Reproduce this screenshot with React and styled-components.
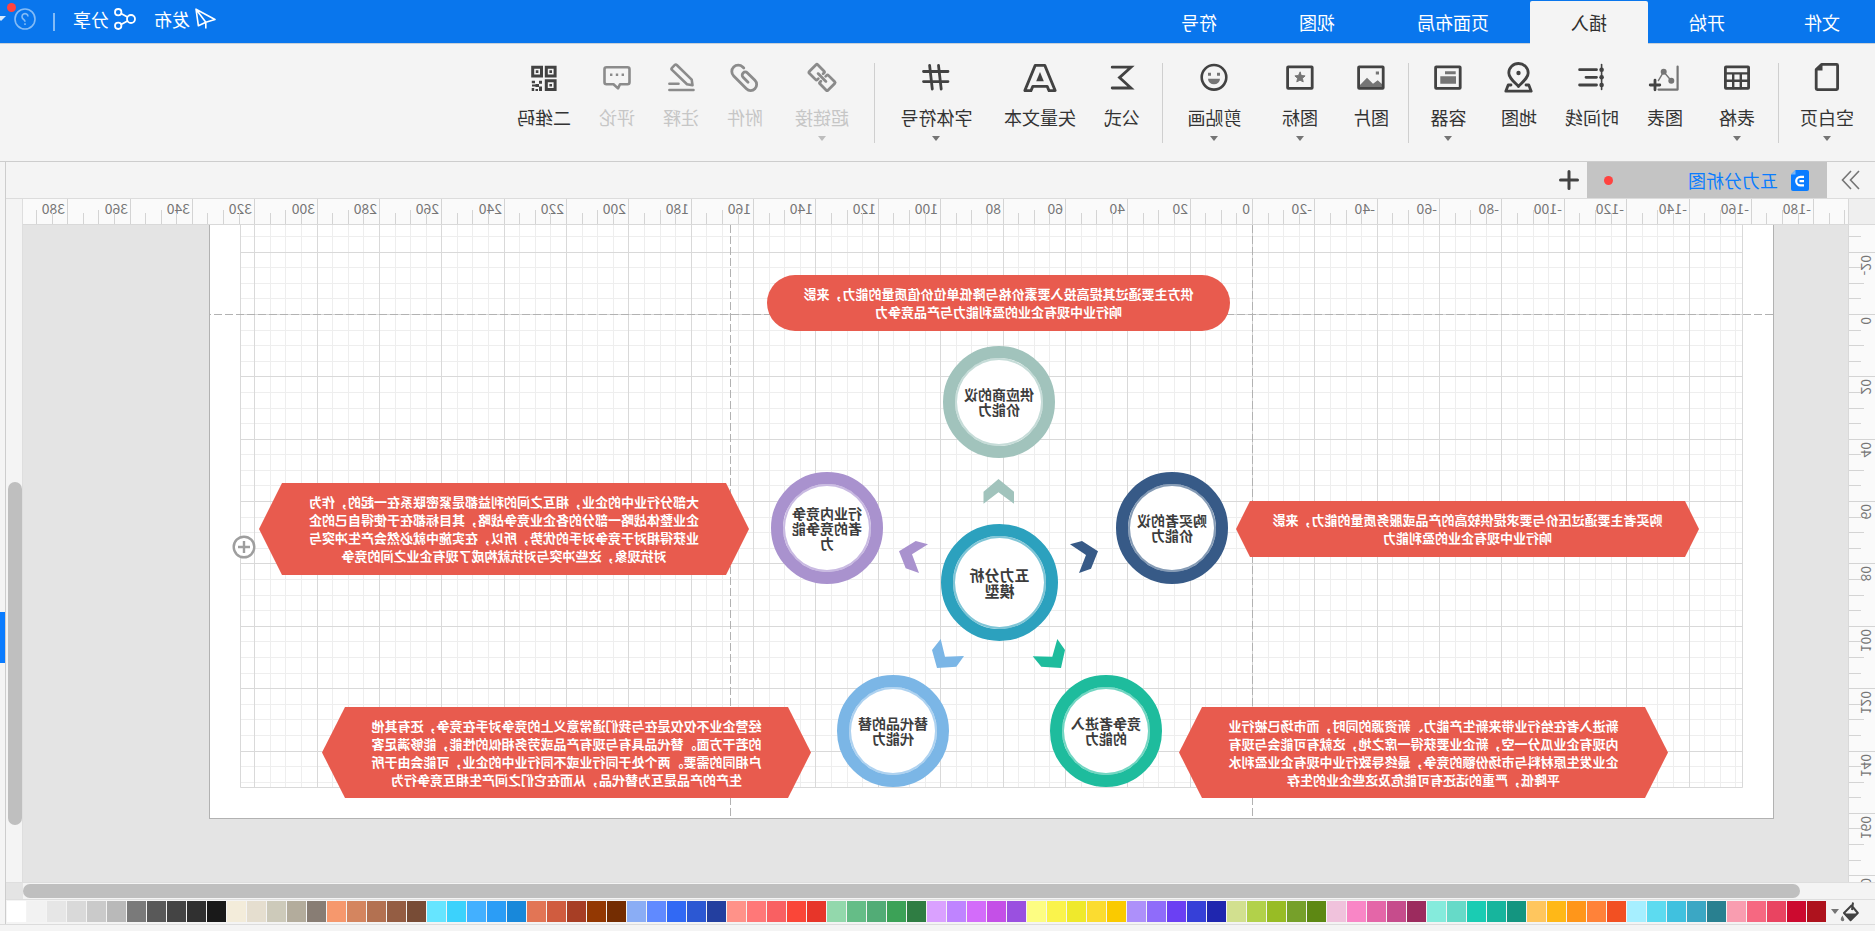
import React from 'react';
import styled, { createGlobalStyle } from 'styled-components';

const FONT = '"Noto Sans CJK SC", "Noto Sans", sans-serif';

const Global = createGlobalStyle`
  * { box-sizing: border-box; }
  html, body { margin: 0; height: 100%; overflow: hidden; background: #f4f4f4; }
  body { font-family: ${FONT}; color: #333; }
  button {
    margin: 0; padding: 0; border: 0; background: none;
    color: inherit; font: inherit; cursor: pointer;
  }
  svg { display: block; }
`;

/* The whole window is shown as seen in a mirror. */
const Window = styled.div`
  display: flex;
  flex-direction: column;
  height: 100vh;
  overflow: hidden;
  background: #f4f4f4;
  transform: scaleX(-1);
`;

/* ---------- title bar ---------- */

const Header = styled.header`
  display: flex;
  justify-content: space-between;
  height: 44px;
  flex: none;
  background: #0976ed;
  border-bottom: 1px solid #c8d0d8;
`;

const MenuTabs = styled.nav`
  display: flex;
  padding-top: 1px;
`;

const MenuTab = styled.button`
  height: 43px;
  padding: ${(p) => (p.$first ? '0 38px 2px 35px' : '0 41px 2px')};
  font-size: 18px;
  line-height: 36px;
  white-space: nowrap;
  color: ${(p) => (p.$active ? '#2f2f2f' : '#fff')};
  background: ${(p) => (p.$active ? '#f4f4f4' : 'transparent')};
  border-radius: 2px 2px 0 0;
`;

const HeaderActions = styled.div`
  display: flex;
  align-items: center;
  height: 38px;
  overflow: hidden;
  color: #fff;
`;

const ActionButton = styled.button`
  display: flex;
  align-items: center;
  gap: 5px;
  margin-right: 18px;
  font-size: 18px;
  line-height: 24px;
`;

const ActionDivider = styled.span`
  width: 2px;
  height: 18px;
  margin: 6px 17px 0 0;
  background: #83bbf6;
`;

const HelpButton = styled.button`
  position: relative;
  width: 36px;
  height: 22px;
`;

const AlertDot = styled.span`
  position: absolute;
  top: -5px;
  left: 20px;
  width: 9px;
  height: 9px;
  border-radius: 50%;
  background: #ff4340;
`;

/* ---------- ribbon ---------- */

const Ribbon = styled.div`
  display: flex;
  height: 118px;
  flex: none;
  border-bottom: 1px solid #cdcdcd;
`;

const Tool = styled.button`
  display: flex;
  flex-direction: column;
  align-items: center;
  width: ${(p) => p.$width}px;
  padding-top: 15px;
  font-size: 18px;
  line-height: 24px;
  white-space: nowrap;
  color: ${(p) => (p.disabled ? '#c6c6c6' : '#333')};
  svg { color: ${(p) => (p.disabled ? '#8b8b8b' : '#424242')}; }
  > span { margin-top: 10px; }
`;

const Separator = styled.span`
  width: 1px;
  height: 80px;
  margin-top: 19px;
  background: #cfcfcf;
`;

const Caret = styled.i`
  width: 0;
  height: 0;
  margin-top: ${(p) => p.$gap || 0}px;
  border: 4px solid transparent;
  border-top: 5px solid ${(p) => (p.$faint ? '#bdbdbd' : '#757575')};
  border-bottom: 0;
`;

/* ---------- body ---------- */

const Body = styled.div`
  display: flex;
  flex: 1;
  min-height: 0;
  border-bottom: 1px solid #dcdcdc;
`;

const Main = styled.main`
  display: flex;
  flex-direction: column;
  flex: 1;
  min-width: 0;
`;

const SideStrip = styled.aside`
  display: flex;
  align-items: flex-start;
  width: 6px;
  flex: none;
  border-left: 1px solid #cdcdcd;
`;

const SideMarker = styled.span`
  width: 5px;
  height: 51px;
  margin-top: 450px;
  background: #0a7cff;
`;

const DocBar = styled.div`
  display: flex;
  align-items: center;
  height: 37px;
  flex: none;
  border-bottom: 1px solid #dcdcdc;
`;

const ExpandButton = styled.button`
  display: flex;
  justify-content: center;
  width: 48px;
`;

const DocTab = styled.button`
  display: flex;
  align-items: center;
  width: 240px;
  height: 36px;
  padding: 0 17px 0 18px;
  gap: 13px;
  background: #c4c4c4;
  color: #0a7cff;
  font-size: 18px;
  line-height: 24px;
`;

const UnsavedDot = styled.i`
  width: 9px;
  height: 9px;
  margin-left: auto;
  border-radius: 50%;
  background: #ff4340;
`;

const AddButton = styled.button`
  margin-left: 8px;
`;

const Workspace = styled.div`
  display: grid;
  grid-template-columns: 27px 1fr 17px;
  grid-template-rows: 26px 1fr;
  flex: 1;
  min-height: 0;
`;

const RulerCorner = styled.div`
  background: #efefef;
  border-right: 1px solid #d9d9d9;
  border-bottom: 1px solid #d9d9d9;
`;

const TopRuler = styled.div`
  overflow: hidden;
  background: #fafafa;
  border-bottom: 1px solid #d9d9d9;
`;

const SideRuler = styled.div`
  grid-row: 2;
  overflow: hidden;
  background: #fafafa;
  border-right: 1px solid #d9d9d9;
`;

const RulerText = styled.text`
  font-family: ${FONT};
  font-size: 14px;
  fill: #767676;
`;

const ScrollColumn = styled.div`
  grid-column: 3;
  grid-row: 1 / 3;
  background: #f4f4f4;
  border-left: 1px solid #dedede;
`;

const ScrollThumbV = styled.div`
  width: 14px;
  height: 343px;
  margin-top: 283px;
  border-radius: 7px;
  background: #bfbfbf;
`;

const ScrollRow = styled.div`
  display: flex;
  height: 17px;
  flex: none;
  border-top: 1px solid #dedede;
`;

const ScrollThumbH = styled.div`
  flex: 1;
  height: 14px;
  margin: 1px 0 0 75px;
  border-radius: 7px;
  background: #bfbfbf;
`;

const ScrollCorner = styled.div`
  width: 17px;
  background: #e4e4e4;
`;

/* ---------- canvas ---------- */

const Canvas = styled.div`
  position: relative;
  overflow: hidden;
  background: #e4e4e4;
`;

const Sheet = styled.svg`
  position: absolute;
  left: 0;
  top: 0;
`;

const Shape = styled.div`
  position: absolute;
  display: flex;
  flex-direction: column;
  align-items: center;
  justify-content: center;
  left: ${(p) => p.$x}px;
  top: ${(p) => p.$y}px;
  width: ${(p) => p.$w}px;
  height: ${(p) => p.$h}px;
  white-space: nowrap;
`;

const NoteShape = styled(Shape)`
  background: #e85b4e;
  color: #fff;
  font-size: 13px;
  font-weight: 700;
  line-height: 18px;
  border-radius: ${(p) => (p.$inset ? 0 : 28)}px;
  clip-path: ${(p) =>
    p.$inset
      ? `polygon(${p.$inset}px 0, calc(100% - ${p.$inset}px) 0, 100% 50%, calc(100% - ${p.$inset}px) 100%, ${p.$inset}px 100%, 0 50%)`
      : 'none'};
`;

const RingShape = styled(Shape)`
  border: 12px solid ${(p) => p.$ring};
  border-radius: 50%;
  background: #fff;
  box-shadow: inset 0 0 0 2px ${(p) => p.$rim};
  color: #3c3c3c;
  font-size: ${(p) => (p.$big ? 15 : 14)}px;
  font-weight: 700;
  line-height: ${(p) => (p.$big ? 16 : 15)}px;
`;

const CanvasAdd = styled.button`
  position: absolute;
  left: 1592px;
  top: 310px;
`;

/* ---------- palette ---------- */

const Palette = styled.div`
  display: flex;
  height: 25px;
  flex: none;
  padding-top: 1px;
  border-top: 1px solid #dedede;
`;

const FillButton = styled.button`
  display: flex;
  align-items: center;
  gap: 1px;
  width: 49px;
  height: 21px;
  padding-left: 16px;
  flex: none;
`;

const Swatches = styled.div`
  display: flex;
  gap: 1px;
  min-width: 0;
  overflow: hidden;
`;

const Swatch = styled.button`
  width: 19px;
  height: 21px;
  flex: none;
  background: ${(p) => p.$color};
`;

const Footer = styled.footer`
  height: 6px;
  flex: none;
`;

/* ---------- icons ---------- */

const GREY = '#757575';

const Icon = ({ children, width = 2.8 }) => (
  <svg width="36" height="36" viewBox="0 0 36 36" fill="none" stroke="currentColor" strokeWidth={width} strokeLinejoin="round" strokeLinecap="round" aria-hidden="true">
    {children}
  </svg>
);

const Frame = () => <rect x="5.8" y="7.8" width="24.6" height="21.6" rx="0.6" />;

const icons = {
  page: (
    <Icon>
      <path d="M7.4 6.4q0-1 1-1H23.5L28.8 10.5V29.6q0 1-1 1H8.4q-1 0-1-1z" />
      <path d="M22.5 5v6.5h6.5z" fill="currentColor" stroke="none" />
    </Icon>
  ),
  table: (
    <Icon>
      <rect x="6.4" y="7.8" width="23.2" height="21.6" rx="0.6" />
      <path d="M7 14.4H29M7 21.8H29M14.2 15V29M21.8 15V29" strokeWidth="2.4" />
    </Icon>
  ),
  chart: (
    <Icon>
      <path d="M5.4 7.5V30.6H24.5" stroke={GREY} strokeWidth="2.2" />
      <path d="M11.7 21.7L19.3 12.7L24.6 21.6" stroke={GREY} strokeWidth="1.4" />
      <circle cx="11.7" cy="21.7" r="3" fill={GREY} stroke="none" />
      <circle cx="19.3" cy="12.7" r="3" fill={GREY} stroke="none" />
      <path d="M28 21.2V30.8M23.2 26H32.8" strokeWidth="2.8" />
    </Icon>
  ),
  timeline: (
    <Icon>
      <path d="M8.4 5.5V30.5" strokeWidth="1.6" />
      <path d="M13.5 10.7H30.4M13.5 18.3H24M13.5 26H30.4" />
      <g fill="currentColor" stroke="none">
        <circle cx="8.4" cy="10.7" r="2.3" />
        <circle cx="8.4" cy="18.3" r="2.3" />
        <circle cx="8.4" cy="26" r="2.3" />
      </g>
    </Icon>
  ),
  map: (
    <Icon>
      <path d="M18.5 27.4C13 21.8 8.8 18.4 8.8 13.9a9.7 9.4 0 0 1 19.4 0C28.2 18.4 24 21.8 18.5 27.4z" />
      <circle cx="18.5" cy="14" r="2.2" fill="currentColor" stroke="none" />
      <path d="M11 26H8.2L5.8 32.2H31.2L28.8 26H26" />
    </Icon>
  ),
  container: (
    <Icon>
      <Frame />
      <path d="M10.3 12.2H21v3H10.3zM10 17.3H25.7v7.5H10z" fill={GREY} stroke="none" />
    </Icon>
  ),
  picture: (
    <Icon>
      <path d="M10 12.5h3.2v3H10zM6.5 28.5V25.6L11.3 21.2L16 24.7L22 18.8L29.5 26.5V28.5z" fill={GREY} stroke="none" />
      <Frame />
    </Icon>
  ),
  star: (
    <Icon>
      <Frame />
      <path d="M18 13.2l1.5 3.3 3.6.4-2.7 2.4.8 3.6-3.2-1.8-3.2 1.8.8-3.6-2.7-2.4 3.6-.4z" fill={GREY} stroke={GREY} strokeWidth="1" />
    </Icon>
  ),
  smile: (
    <Icon>
      <circle cx="18" cy="18.3" r="12.3" strokeWidth="2.6" />
      <path d="M12 13.8h3v3h-3zM21 13.8h3v3h-3zM12 19.8h12a6 5.5 0 0 1-12 0z" fill={GREY} stroke="none" />
    </Icon>
  ),
  sigma: (
    <Icon>
      <path d="M27.8 8.2H9L20.5 18.6L9 29H27.8" strokeLinejoin="miter" />
    </Icon>
  ),
  letter: (
    <Icon>
      <path d="M13.2 6.4H22.8L33.2 31.6H27L25.2 27.4H10.8L9 31.6H2.8z" />
      <path d="M18 13l3.8 9.2h-7.6z" fill="currentColor" stroke="none" />
    </Icon>
  ),
  hash: (
    <Icon>
      <path d="M15.5 6.3L12.8 30M24.4 6.3L21.7 30M6 12.5H30.5M6 22.6H30.5" />
    </Icon>
  ),
  link: (
    <Icon>
      <g transform="translate(18 18.5) rotate(-45)">
        <path d="M-1.8 -3.4V-4.8Q-1.8 -6 -3 -6H-12Q-13.2 -6 -13.2 -4.8V4.8Q-13.2 6 -12 6H-3Q-1.8 6 -1.8 4.8V3.4" />
        <path d="M1.8 -3.4V-4.8Q1.8 -6 3 -6H12Q13.2 -6 13.2 -4.8V4.8Q13.2 6 12 6H3Q1.8 6 1.8 4.8V3.4" />
        <path d="M-5.5 0H5.5" />
      </g>
    </Icon>
  ),
  clip: (
    <Icon>
      <path transform="translate(18 18.5) rotate(-45)" d="M-5.5 1.2H1.5a3 3 0 0 0 0-6.2H-9a6 6 0 0 0 0 12H9a6.4 6.4 0 0 0 0-12.8H7.5" />
    </Icon>
  ),
  note: (
    <Icon>
      <path d="M22 6.2q1.2-1.2 2.4 0l2.6 2.6q1 1 0 2L12 25.2L6.5 26.3L7.3 20.6z" strokeWidth="2.6" />
      <path d="M20.5 24.8H29.6M5.5 31H29.6" strokeWidth="2.6" />
    </Icon>
  ),
  comment: (
    <Icon>
      <path d="M7.5 8.2H28.5q2 0 2 2V23.2q0 2-2 2H21.5L17 29.4L15 25.2H7.5q-2 0-2-2V10.2q0-2 2-2z" strokeWidth="2.6" />
      <path d="M11 14.6h2.4v2.4H11zM16.8 14.6h2.4v2.4h-2.4zM22.6 14.6H25v2.4h-2.4z" fill="currentColor" stroke="none" />
    </Icon>
  ),
  qr: (
    <Icon>
      <path d="M6.9 8.2h8.8V17H6.9zM20.5 8.2h8.8V17h-8.8zM6.9 21.8h8.8v8.8H6.9z" strokeWidth="3" strokeLinejoin="miter" />
      <path d="M10 11.3h2.6v2.6H10zM23.6 11.3h2.6v2.6h-2.6zM10 24.9h2.6v2.6H10zM20 21.7h3v3h-3zM27 21.7h3.2v2.5H27zM23 25h3.5v3H23zM20 27.5h3v4.5h-3zM26.5 25.5h3.5v2h-3.5zM27.8 29h2.5v3h-2.5zM24 30h2.5v2H24z" fill="currentColor" stroke="none" />
    </Icon>
  ),
};

const PlaneIcon = () => (
  <svg width="21" height="22" viewBox="0 0 21 22" fill="none" stroke="currentColor" strokeWidth="1.6" strokeLinejoin="round" aria-hidden="true">
    <path d="M1 11.5L20 1.2L17.6 17.8L10.2 14.2zM10.2 14.2V20.5M10.2 14.2L20 1.2" />
  </svg>
);

const ShareIcon = () => (
  <svg width="22" height="22" viewBox="0 0 22 22" fill="none" stroke="currentColor" strokeWidth="1.8" aria-hidden="true">
    <circle cx="5" cy="11" r="4" />
    <circle cx="17.8" cy="4.2" r="3.2" />
    <circle cx="17.8" cy="17.8" r="3.2" />
    <path d="M8.5 9L15 5.5M8.5 13L15 16.5" />
  </svg>
);

const HelpIcon = () => (
  <svg width="36" height="22" viewBox="0 0 36 22" fill="none" stroke="#83bbf6" strokeWidth="1.6" aria-hidden="true">
    <circle cx="11" cy="11" r="10" />
    <path d="M8 8.6a3 3 0 1 1 4.6 2.6q-1.6 1-1.6 2.6" />
    <path d="M11 15.2v1.8" />
    <path d="M30 8h10l-5 5z" fill="#d6e9fd" stroke="none" />
  </svg>
);

const ChevronsIcon = () => (
  <svg width="20" height="20" viewBox="0 0 20 20" fill="none" stroke="#757575" strokeWidth="1.6" aria-hidden="true">
    <path d="M2 1L10.500 10L2 19M10 1L18.500 10L10 19" />
  </svg>
);

const DocIcon = () => (
  <svg width="18" height="21" viewBox="0 0 18 21" aria-hidden="true">
    <path d="M2 0H13.5L18 4.5V19q0 2-2 2H2q-2 0-2-2V2q0-2 2-2z" fill="#0a7cff" />
    <path d="M13.5 0V4.5H18z" fill="#7db8f5" />
    <path d="M5 6.800H8.500a4.300 4.300 0 0 1 0 8.600H5M5 11.100H9.500" fill="none" stroke="#fff" strokeWidth="2.200" />
  </svg>
);

const PlusIcon = () => (
  <svg width="20" height="20" viewBox="0 0 20 20" stroke="#424242" strokeWidth="3" strokeLinecap="round" aria-hidden="true">
    <path d="M10 1.5V18.5M1.5 10H18.5" />
  </svg>
);

const CirclePlusIcon = () => (
  <svg width="24" height="24" viewBox="0 0 24 24" fill="#fff" stroke="#9e9e9e" strokeWidth="2.4" aria-hidden="true">
    <circle cx="12" cy="12" r="10.3" />
    <path d="M12 6V18M6 12H18" />
  </svg>
);

const BucketIcon = () => (
  <svg width="19" height="21" viewBox="0 0 19 21" fill="none" stroke="#424242" strokeWidth="2" strokeLinejoin="round" aria-hidden="true">
    <path d="M7.500 4.500L1.200 12L8.500 19.200L15 12zM6 1.500L7 9" />
    <path d="M1.500 12.500L8.500 20L14.800 12.500z" fill="#424242" stroke="none" />
    <path d="M16.500 14.500q2.200 3 1.800 4.300-.6 1.600-2 1.400-1.700-.2-1.600-1.800z" fill="#757575" stroke="none" />
  </svg>
);

/* ---------- data ---------- */

const menu = ['文件', '开始', '插入', '页面布局', '视图', '符号'];

const ribbon = [
  [{ label: '空白页', icon: 'page', width: 96, caret: true }],
  [
    { label: '表格', icon: 'table', width: 82, caret: true },
    { label: '图表', icon: 'chart', width: 62 },
    { label: '时间线', icon: 'timeline', width: 84 },
    { label: '地图', icon: 'map', width: 62 },
    { label: '容器', icon: 'container', width: 79, caret: true },
  ],
  [
    { label: '图片', icon: 'picture', width: 74 },
    { label: '图标', icon: 'star', width: 68, caret: true },
    { label: '剪贴画', icon: 'smile', width: 103, caret: true },
  ],
  [
    { label: '公式', icon: 'sigma', width: 80 },
    { label: '矢量文本', icon: 'letter', width: 84 },
    { label: '字体符号', icon: 'hash', width: 123, caret: true },
  ],
  [
    { label: '超链接', icon: 'link', width: 104, caret: true, disabled: true },
    { label: '附件', icon: 'clip', width: 50, disabled: true },
    { label: '注释', icon: 'note', width: 78, disabled: true },
    { label: '评论', icon: 'comment', width: 50, disabled: true },
    { label: '二维码', icon: 'qr', width: 96 },
  ],
];

const notes = [
  {
    x: 618, y: 50, w: 463, h: 56,
    lines: ['供方主要通过其提高投入要素价格与降低单位价值质量的能力，来影', '响行业中现有企业的盈利能力与产品竞争力'],
  },
  {
    x: 149, y: 276, w: 463, h: 56, inset: 14,
    lines: ['购买者主要通过压价与要求提供较高的产品或服务质量的能力，来影', '响行业中现有企业的盈利能力'],
  },
  {
    x: 1099, y: 258, w: 490, h: 92, inset: 23,
    lines: ['大部分行业中的企业，相互之间的利益都是紧密联系在一起的，作为', '企业整体战略一部分的各企业竞争战略，其目标都在于使得自己的企', '业获得相对于竞争对手的优势，所以，在实施中就必然会产生冲突与', '对抗现象，这些冲突与对抗就构成了现有企业之间的竞争'],
  },
  {
    x: 180, y: 482, w: 489, h: 91, inset: 23,
    lines: ['新进入者在给行业带来新生产能力、新资源的同时，而市场已被行业', '内现有企业瓜分一空，新企业要获得一席之地，这就有可能会与现有', '企业发生原材料与市场份额的竞争，最终导致行业中现有企业盈利水', '平降低，严重的话还有可能危及这些企业的生存'],
  },
  {
    x: 1037, y: 482, w: 489, h: 91, inset: 23,
    lines: ['经营企业不仅仅是在与我们通常意义上的竞争对手在竞争，还有其他', '的若干方面。替代品具有与现有产品或劳务相似的性能，能够满足客', '户相同的需要。两个处于同行业或不同行业中的企业，可能会由于所', '生产的产品是互为替代品，从而在它们之间产生相互竞争行为'],
  },
];

const rings = [
  { x: 793, y: 121, size: 112, ring: '#a1c3bc', rim: '#c6dcd8', lines: ['供应商的议', '价能力'] },
  { x: 965, y: 247, size: 112, ring: '#a992ce', rim: '#c9bae2', lines: ['行业内竞争', '者的竞争能', '力'] },
  { x: 620, y: 247, size: 112, ring: '#375a87', rim: '#859bb5', lines: ['购买者的议', '价能力'] },
  { x: 790, y: 299, size: 117, ring: '#2ca1be', rim: '#7fc5d6', lines: ['五力分析', '模型'], big: true },
  { x: 899, y: 450, size: 112, ring: '#7bb6e6', rim: '#aed2f0', lines: ['替代品的替', '代能力'] },
  { x: 686, y: 450, size: 112, ring: '#1ebc9d', rim: '#72d6c2', lines: ['竞争者进入', '的能力'] },
];

const arrows = [
  ['#a1c3bc', '849.5,254 834,266.7 834,278.7 849.5,267.3 864.5,278.7 864.5,266.7'],
  ['#a992ce', '920,319.3 932.3,316 949,326.3 942.3,343.3 929,348 936,329.3'],
  ['#375a87', '778,319.3 766,316 750,326.3 757,343.7 769,348 762,330'],
  ['#7bb6e6', '907.3,414 916,425 911,443 891.7,441.7 884,431 903,431.7'],
  ['#1ebc9d', '790.7,414 783,425 787,443 806.7,441.7 815.3,431.3 795.7,431.7'],
];

const palette = (
  'ae121d cc0a2f e94461 f66881 f99db0 298090 3ba7c4 40c1df 5ddbf0 a6efff ' +
  'f25022 ff8239 ff961a ffb817 ffc65e 149580 17b59d 1accb3 66dac8 85ebdc ' +
  '9c2b5e c64c8c e466a8 f986c6 f0c2dc 5d8813 76a02a 98bc25 b2d14a d2e08f ' +
  '1f26af 3640d8 6b40f3 8f6cfa ad90fa faca00 fbdc30 efe92c faf34c fdfd82 ' +
  '9a50e0 c450e7 d36cfa bf84ff daa1ff 2f7d43 3ca257 52ac76 65bd87 93d8ac ' +
  'e73529 fa4638 f96062 ff7878 ff9289 233f9f 2c58d3 3169f4 608aff 8aadf5 ' +
  '742d02 933802 a73e25 d05c3f e27555 1888da 2b9df6 43b0ff 3cd2fc 66e5ff ' +
  '784c36 945d43 b37151 d4855f f6986d 887d74 b3ac9c cdcaba e5decf f3ecda ' +
  '191919 303030 444444 595959 7a7a7a b9b9b9 cacaca d9d9d9 e6e6e6 f2f2f2 ffffff'
).split(' ');

/* ---------- rulers and grid ---------- */

/* pixels per millimetre at the current zoom, and where 0 lies on the canvas */
const SCALE = 3.118;
const ORIGIN_X = 595;
const ORIGIN_Y = 89;

const range = (from, to, step) => {
  const out = [];
  for (let v = from; v <= to; v += step) out.push(v);
  return out;
};

const tickSize = (v) => (v % 20 === 0 ? 26 : v % 10 === 0 ? 15 : 12);

const HorizontalTicks = () => (
  <svg width="100%" height="25">
    {range(-190, 400, 5).map((v) => {
      const x = Math.round(ORIGIN_X + v * SCALE);
      return (
        <g key={v}>
          <rect x={x} y={26 - tickSize(v)} width="1" height={tickSize(v)} fill="#d4d4d4" />
          {v % 20 === 0 && v < 400 && <RulerText x={x + 3} y="15">{v}</RulerText>}
        </g>
      );
    })}
  </svg>
);

const VerticalTicks = () => (
  <svg width="26" height="100%">
    {range(-25, 320, 5).map((v) => {
      const y = Math.round(ORIGIN_Y + v * SCALE);
      return (
        <g key={v}>
          <rect x={26 - tickSize(v)} y={y} width={tickSize(v)} height="1" fill="#d4d4d4" />
          {v % 20 === 0 && v <= 180 && (
            <RulerText textAnchor="end" transform={`translate(14 ${y + 3}) rotate(-90)`}>{v}</RulerText>
          )}
        </g>
      );
    })}
  </svg>
);

const GRID = { left: 105, right: 1607, bottom: 562 };

const gridLines = (origin, from, to) =>
  range(-40, 80, 1)
    .map((k) => ({ major: k % 4 === 0, at: Math.round(origin + k * 5 * SCALE) }))
    .filter((l) => l.at > from && l.at < to)
    .sort((a, b) => a.major - b.major);

const lineColor = (l) => (l.major ? '#d9d9d9' : '#eeeeee');

const Paper = () => (
  <Sheet width="1825" height="657">
    <rect x="74.5" y="-10.5" width="1564" height="604" fill="#fff" stroke="#b2b2b2" />
    {gridLines(ORIGIN_X, GRID.left, GRID.right).filter((l) => !l.major).map((l) => (
      <rect key={l.at} x={l.at} y="0" width="1" height={GRID.bottom} fill={lineColor(l)} />
    ))}
    {gridLines(ORIGIN_Y, 0, GRID.bottom).map((l) => (
      <rect key={l.at} x={GRID.left} y={l.at} width={GRID.right - GRID.left} height="1" fill={lineColor(l)} />
    ))}
    {gridLines(ORIGIN_X, GRID.left, GRID.right).filter((l) => l.major).map((l) => (
      <rect key={l.at} x={l.at} y="0" width="1" height={GRID.bottom} fill={lineColor(l)} />
    ))}
    <path d="M105.5 0V562.5H1607.5V0" fill="none" stroke="#d9d9d9" />
    <path d="M75 89.5H1638M595.5 0V593M1117.5 0V593" fill="none" stroke="#b2b2b2" strokeDasharray="8 3" />
    {arrows.map(([color, points]) => <polygon key={color} points={points} fill={color} />)}
  </Sheet>
);

export default function App() {
  return (
    <>
      <Global />
      <Window>
        <Header>
          <MenuTabs>
            {menu.map((name, i) => (
              <MenuTab key={name} $first={i === 0} $active={name === '插入'}>{name}</MenuTab>
            ))}
          </MenuTabs>
          <HeaderActions>
            <ActionButton><PlaneIcon />发布</ActionButton>
            <ActionButton><ShareIcon />分享</ActionButton>
            <ActionDivider />
            <HelpButton aria-label="帮助"><HelpIcon /><AlertDot /></HelpButton>
          </HeaderActions>
        </Header>

        <Ribbon>
          {ribbon.map((group, i) => (
            <React.Fragment key={group[0].label}>
              {i > 0 && <Separator />}
              {group.map((t) => (
                <Tool key={t.label} $width={t.width} disabled={t.disabled}>
                  {icons[t.icon]}
                  <span>{t.label}</span>
                  {t.caret && <Caret $gap={7} $faint={t.disabled} />}
                </Tool>
              ))}
            </React.Fragment>
          ))}
        </Ribbon>

        <Body>
          <Main>
            <DocBar>
              <ExpandButton aria-label="展开"><ChevronsIcon /></ExpandButton>
              <DocTab><DocIcon />五力分析图<UnsavedDot /></DocTab>
              <AddButton aria-label="新建"><PlusIcon /></AddButton>
            </DocBar>

            <Workspace>
              <RulerCorner />
              <TopRuler><HorizontalTicks /></TopRuler>
              <SideRuler><VerticalTicks /></SideRuler>
              <Canvas>
                <Paper />
                {notes.map((n) => (
                  <NoteShape key={n.lines[0]} $x={n.x} $y={n.y} $w={n.w} $h={n.h} $inset={n.inset}>
                    {n.lines.map((l) => <span key={l}>{l}</span>)}
                  </NoteShape>
                ))}
                {rings.map((r) => (
                  <RingShape key={r.ring} $x={r.x} $y={r.y} $w={r.size} $h={r.size} $ring={r.ring} $rim={r.rim} $big={r.big}>
                    {r.lines.map((l) => <span key={l}>{l}</span>)}
                  </RingShape>
                ))}
                <CanvasAdd aria-label="添加"><CirclePlusIcon /></CanvasAdd>
              </Canvas>
              <ScrollColumn><ScrollThumbV /></ScrollColumn>
            </Workspace>

            <ScrollRow><ScrollThumbH /><ScrollCorner /></ScrollRow>

            <Palette>
              <FillButton aria-label="填充"><BucketIcon /><Caret /></FillButton>
              <Swatches>
                {palette.map((c) => <Swatch key={c} $color={`#${c}`} aria-label={`#${c}`} />)}
              </Swatches>
            </Palette>
          </Main>
          <SideStrip><SideMarker /></SideStrip>
        </Body>
        <Footer />
      </Window>
    </>
  );
}
